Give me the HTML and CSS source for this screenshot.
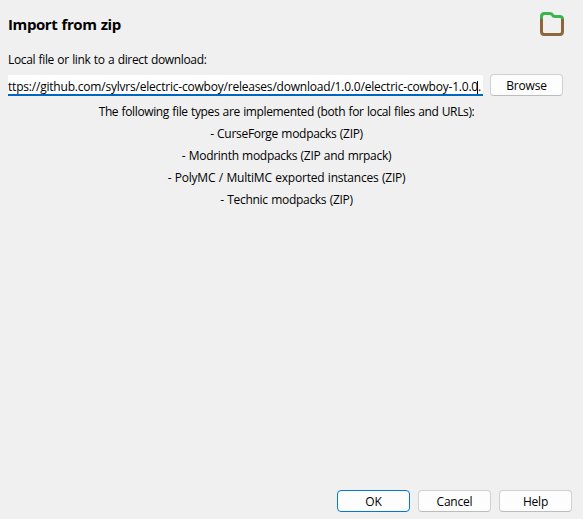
FILE: index.html
```html
<!DOCTYPE html>
<html lang="en">
<head>
<meta charset="utf-8">
<title>Import from zip</title>
<link rel="stylesheet" href="styles.css">
</head>
<body>
<main class="dialog">
  <header class="header">
    <h1 class="title">Import from zip</h1>
    <svg class="folder" width="24" height="24" viewBox="0 0 24 24" fill="none" stroke-width="3">
      <path stroke="#8f663b" d="M1.5 7V19.500Q1.500 22.500 4.500 22.500H19.500Q22.500 22.500 22.500 19.500V7"/>
      <path stroke="#39b54a" d="M1.500 7V4.500Q1.500 1.500 4.500 1.500H10Q12 1.500 12.500 3Q13 4.500 15 4.500H19.500Q22.500 4.500 22.500 7"/>
    </svg>
  </header>
  <label class="label">Local file or link to a direct download:</label>
  <div class="row">
    <div class="field"><span class="url">ttps://github.com/sylvrs/electric-cowboy/releases/download/1.0.0/electric-cowboy-1.0.0<i class="caret"></i>.</span></div>
    <button class="button">Browse</button>
  </div>
  <div class="types">
    <p class="line intro">The following file types are implemented (both for local files and URLs):</p>
    <p class="line">- CurseForge modpacks (ZIP)</p>
    <p class="line">- Modrinth modpacks (ZIP and mrpack)</p>
    <p class="line wide">- PolyMC / MultiMC exported instances (ZIP)</p>
    <p class="line">- Technic modpacks (ZIP)</p>
  </div>
  <footer class="footer">
    <button class="button primary">OK</button>
    <button class="button">Cancel</button>
    <button class="button">Help</button>
  </footer>
</main>
</body>
</html>
```
FILE: styles.css
```css
* { box-sizing: border-box; }
body {
  margin: 0;
  background: #f0f0f0;
  color: #000;
  font: 12px/16px "Open Sans", "Noto Sans", sans-serif;
  letter-spacing: -0.35px;
  word-spacing: 0.6px;
}
.dialog {
  display: flex;
  flex-direction: column;
  width: 583px;
  height: 519px;
  padding: 12px 11px 7px 8px;
  overflow: hidden;
}
.header {
  display: flex;
  justify-content: space-between;
  height: 40px;
  padding-right: 8px;
}
.title {
  margin: 2px 0 0;
  font-size: 15px;
  line-height: 20px;
  font-weight: 700;
  letter-spacing: -0.4px;
}
.label { height: 22px; white-space: nowrap; }
.row { display: flex; gap: 7px; height: 22px; padding-right: 9px; }
.field {
  width: 475px;
  height: 21px;
  margin-top: 1px;
  padding-top: 3px;
  background: #fff;
  border-bottom: 2px solid #0067c0;
  letter-spacing: -0.205px;
  white-space: nowrap;
  overflow: hidden;
}
.url { display: block; height: 16px; line-height: 17px; }
.caret {
  display: inline-block;
  width: 1px;
  height: 13px;
  margin: 0 0 0 -1px;
  background: #000;
  vertical-align: -3px;
}
.button {
  width: 73px;
  height: 22px;
  padding: 1px 0 0;
  border: 1px solid #d0d0d0;
  border-bottom-color: #bcbcbc;
  border-radius: 4px;
  background: #fdfdfd;
  color: #000;
  font: inherit;
  letter-spacing: -0.2px;
}
.primary { border-color: #0078d4; }
.types { width: 557px; padding-top: 8px; text-align: center; }
.line { margin: 0 0 6px; white-space: nowrap; letter-spacing: -0.3px; }
.intro { letter-spacing: -0.37px; }
.wide { letter-spacing: -0.22px; }
.footer { display: flex; justify-content: flex-end; gap: 8px; margin-top: auto; }
```
